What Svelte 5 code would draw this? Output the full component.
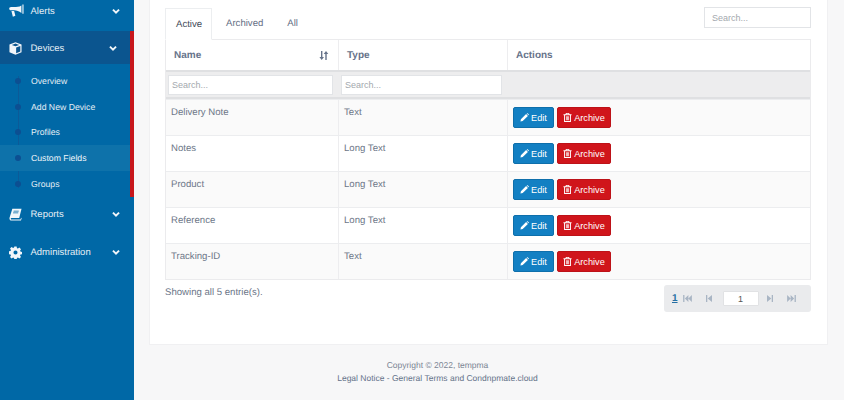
<script lang="ts">
  const subItems = ['Overview', 'Add New Device', 'Profiles', 'Custom Fields', 'Groups'];
  const rows = [
    { name: 'Delivery Note', type: 'Text' },
    { name: 'Notes', type: 'Long Text' },
    { name: 'Product', type: 'Long Text' },
    { name: 'Reference', type: 'Long Text' },
    { name: 'Tracking-ID', type: 'Text' }
  ];
</script>

{#snippet chevron()}
  <svg class="chevron" viewBox="0 0 10 8" width="8" height="7" aria-hidden="true">
    <path d="M1.2 1.6 5 5.4l3.8-3.8" fill="none" stroke="currentColor" stroke-width="2.4" />
  </svg>
{/snippet}

<div class="page">
  <aside class="sidebar">
    <nav class="nav">
      <a class="nav-item">
        <svg class="nav-icon wide" viewBox="0 0 16 14" aria-hidden="true">
          <path fill="currentColor" d="M14.300 0h1.200v10h-1.200zM13.200 1v8C10.800 7.300 8 6.400 5.600 6.200H2.200C.9 6.200 .2 5.300 .2 4.500S.9 2.800 2.200 2.800h3.400C8 2.600 10.800 2.700 13.200 1zM2.600 7.100h2.900l1.300 5-2.700 1.100z" />
        </svg>
        <span class="nav-label">Alerts</span>
        {@render chevron()}
      </a>

      <div class="group">
        <a class="nav-item active">
          <svg class="nav-icon" viewBox="0 0 14 14" aria-hidden="true">
            <path fill="currentColor" d="M7 0.300 13.500 2.800v8.300L7 13.700 0.500 11.100V2.800zM7 1.700 3 3.200 7 4.700l4-1.500zM7.700 6v6l4.500-1.800V4.300z" />
          </svg>
          <span class="nav-label">Devices</span>
          {@render chevron()}
        </a>
        <ul class="submenu">
          {#each subItems as item}
            <li class:current={item === 'Custom Fields'}>
              <span class="dot"></span>
              {item}
            </li>
          {/each}
        </ul>
      </div>

      <a class="nav-item">
        <svg class="nav-icon" viewBox="0 0 14 14" aria-hidden="true">
          <path fill="currentColor" fill-rule="evenodd" d="M3.600 0.800H13.500L11 10.800H3C2.200 10.800 1.800 11.200 1.900 11.800 2 12.300 2.400 12.500 3 12.500H12.400L13 10.500 13.600 11 12.900 13.500H2.800C1.400 13.500 0.300 12.400 0.500 10.700zM5 3h5.600l-.2.800H4.800zM4.500 4.800h5.600l-.2.800H4.300z" />
        </svg>
        <span class="nav-label">Reports</span>
        {@render chevron()}
      </a>

      <a class="nav-item">
        <svg class="nav-icon" viewBox="0 0 14 14" aria-hidden="true">
          <path fill="currentColor" fill-rule="evenodd" d="M5.800 0.500h2.400l.4 1.800 1 .4 1.600-1 1.700 1.700-1 1.600.4 1 1.800.4v2.400l-1.800.4-.4 1 1 1.600-1.700 1.700-1.600-1-1 .4-.4 1.800H5.800l-.4-1.800-1-.4-1.600 1-1.700-1.700 1-1.600-.4-1-1.800-.4V5.800l1.800-.4.4-1-1-1.600 1.700-1.700 1.600 1 1-.4zM7 4.800a2.200 2.200 0 1 0 0 4.400 2.200 2.200 0 0 0 0-4.400z" />
        </svg>
        <span class="nav-label">Administration</span>
        {@render chevron()}
      </a>
    </nav>
  </aside>

  <main class="content">
    <section class="card">
      <div class="toolbar">
        <div class="tabs">
          <span class="tab selected">Active</span>
          <span class="tab">Archived</span>
          <span class="tab">All</span>
        </div>
        <input class="search global-search" placeholder="Search..." />
      </div>

      <div class="table">
        <div class="row head">
          <div class="cell name-col">
            Name
            <svg class="sort" viewBox="0 0 10 9" width="10" height="9" aria-hidden="true">
              <path fill="currentColor" d="M2 0h1.400v6H5L2.700 9 0.400 6H2zM7 0l2.300 3H7.700v6H6.300V3H4.700z" />
            </svg>
          </div>
          <div class="cell type-col">Type</div>
          <div class="cell actions-col">Actions</div>
        </div>
        <div class="row filters">
          <div class="cell name-col"><input class="search" placeholder="Search..." /></div>
          <div class="cell type-col"><input class="search" placeholder="Search..." /></div>
          <div class="cell actions-col"></div>
        </div>
        {#each rows as row, i}
          <div class="row body" class:odd={i % 2 === 0}>
            <div class="cell name-col">{row.name}</div>
            <div class="cell type-col">{row.type}</div>
            <div class="cell actions-col">
              <button class="btn edit">
                <svg viewBox="0 0 10 10" width="9" height="9" aria-hidden="true">
                  <path fill="currentColor" d="M0.500 9.500 1 7 6.800 1.200 8.800 3.200 3 9zM7.400 0.600 8 0.300c.3-.1.500 0 .7.200l1 1c.2.200.2.500 0 .7l-.3.400z" />
                </svg>
                Edit
              </button>
              <button class="btn archive">
                <svg viewBox="0 0 10 10" width="9" height="9" aria-hidden="true">
                  <path fill="currentColor" fill-rule="evenodd" d="M3.300 0h3.400l.6 1.400h2.200v1H8.800V10H1.200V2.400H.5v-1h2.200zM4 .9l-.2.500h2.400L6 .9zM2.300 2.400V9h5.400V2.400zM3.300 3.600h.8v4.400h-.8zM4.600 3.600h.8v4.400h-.8zM5.900 3.600h.8v4.400h-.8z" />
                </svg>
                Archive
              </button>
            </div>
          </div>
        {/each}
      </div>

      <div class="table-footer">
        <span class="count">Showing all 5 entrie(s).</span>
        <div class="pager">
          <a class="page-current">1</a>
          <svg class="pg first" viewBox="0 0 10 8" width="9" height="7" aria-hidden="true">
            <path fill="currentColor" d="M0 0h1.500v8H0zM6 0v8L2 4zM10 0v8L6 4z" />
          </svg>
          <svg class="pg prev" viewBox="0 0 7 8" width="6" height="7" aria-hidden="true">
            <path fill="currentColor" d="M0 0h1.500v8H0zM7 0v8L2 4z" />
          </svg>
          <input class="page-input" value="1" />
          <svg class="pg next" viewBox="0 0 7 8" width="6" height="7" aria-hidden="true">
            <path fill="currentColor" d="M7 0H5.500v8H7zM0 0v8l5-4z" />
          </svg>
          <svg class="pg last" viewBox="0 0 10 8" width="9" height="7" aria-hidden="true">
            <path fill="currentColor" d="M10 0H8.500v8H10zM4 0v8l4-4zM0 0v8l4-4z" />
          </svg>
        </div>
      </div>
    </section>

    <footer class="footer">
      <div>Copyright © 2022, tempma</div>
      <div class="legal">Legal Notice - General Terms and Condnpmate.cloud</div>
    </footer>
  </main>
</div>

<style>
  :global(body) {
    margin: 0;
    font-family: "Liberation Sans", Arial, sans-serif;
    font-size: 10px;
    background: #f7f7f8;
    text-rendering: geometricPrecision;
  }

  .page {
    display: flex;
    height: 400px;
    overflow: hidden;
  }

  .sidebar {
    width: 134px;
    flex-shrink: 0;
    background: #0068a6;
    color: #e4eef5;
    overflow: hidden;
  }

  .nav {
    margin-top: -8px;
  }

  .nav-item {
    display: flex;
    align-items: center;
    height: 38px;
    padding: 0 14px 0 9px;
    font-size: 9.5px;
  }

  .nav-icon {
    width: 13px;
    height: 13px;
    flex-shrink: 0;
    color: #f2f6fa;
  }

  .nav-icon.wide {
    width: 15px;
    height: 14px;
    margin-right: -2px;
  }

  .nav-label {
    margin-left: 8.500px;
    flex: 1;
  }

  .chevron {
    color: #f2f6fa;
  }

  .group {
    border-right: 4px solid #c8171c;
    height: 166px;
    box-sizing: border-box;
    margin-top: 1px;
    margin-bottom: -2px;
  }

  .nav-item.active {
    height: 33px;
    padding-top: 1px;
    padding-right: 13px;
    box-sizing: border-box;
    background: #0b558f;
  }

  .submenu {
    list-style: none;
    margin: 4px 0 0;
    padding: 0;
    position: relative;
  }

  .submenu li {
    display: flex;
    align-items: center;
    height: 25.7px;
    padding-left: 31px;
    font-size: 8.7px;
    position: relative;
  }

  .submenu li.current {
    background: #0e72aa;
    color: #f2f6fa;
  }

  .dot {
    position: absolute;
    left: 15px;
    width: 6px;
    height: 6px;
    border-radius: 50%;
    background: #0c4f92;
  }

  .submenu::before {
    content: "";
    position: absolute;
    left: 17.500px;
    top: 8px;
    bottom: 8px;
    width: 1px;
    background: #0c5a98;
  }

  .content {
    flex: 1;
    min-width: 0;
    padding: 0 16px 0 15px;
    color: #6b7688;
  }

  .card {
    background: #fff;
    border: 1px solid #f0f0f2;
    border-top: 0;
    height: 345px;
    box-sizing: border-box;
    padding: 7px 16px 0 15px;
  }

  .toolbar {
    display: flex;
    justify-content: space-between;
    align-items: flex-start;
    height: 32px;
  }

  .tabs {
    display: flex;
    margin-top: 1px;
    position: relative;
    z-index: 1;
  }

  .tab {
    height: 30px;
    line-height: 32px;
    padding: 0 14px 0 0;
    font-size: 9.6px;
    color: #667085;
  }

  .tab + .tab {
    padding-left: 10px;
  }

  .tab.selected {
    width: 47px;
    box-sizing: border-box;
    padding: 0 0 0 10px;
    margin-right: 4px;
    background: #fff;
    border: 1px solid #eceef0;
    border-bottom: 1px solid #fff;
    height: 32px;
    color: #444c5a;
  }

  .search {
    display: block;
    box-sizing: border-box;
    width: 100%;
    height: 20px;
    padding: 0 3px;
    border: 1px solid #e2e4e7;
    background: #fff;
    font: 9px "Liberation Sans", Arial, sans-serif;
  }

  .search::placeholder {
    color: #a3a8ae;
  }

  .global-search {
    width: 107px;
    height: 21px;
    padding: 0 7px;
  }

  .table {
    border: 1px solid #ebebed;
    font-size: 9.6px;
  }

  .row {
    display: grid;
    grid-template-columns: 173px 169px 1fr;
  }

  .cell {
    box-sizing: border-box;
    border-right: 1px solid #ededef;
  }

  .cell:last-child {
    border-right: 0;
  }

  .head {
    height: 32px;
    border-bottom: 2px solid #dfe0e2;
    box-sizing: border-box;
    font-weight: bold;
    color: #66738a;
    font-size: 10px;
  }

  .head .cell {
    display: flex;
    align-items: center;
    justify-content: space-between;
    padding: 1px 9px 0 8px;
  }

  .sort {
    color: #66738a;
  }

  .filters {
    height: 27px;
    background: #ededee;
    border-bottom: 2px solid #dfe0e2;
    box-sizing: border-box;
  }

  .filters .cell {
    padding: 3px 6px 3px 2px;
    border-right: 0;
  }

  .body {
    height: 36px;
    border-top: 1px solid #ecedef;
    box-sizing: border-box;
    color: #6d7788;
  }

  .body.odd {
    background: #fafafa;
  }

  .body .cell {
    padding: 6.500px 5px 0 5px;
  }

  .body .actions-col {
    display: flex;
    gap: 3px;
    padding: 7px 0 0 5px;
  }

  .btn {
    display: flex;
    align-items: center;
    justify-content: center;
    gap: 2px;
    height: 21px;
    padding: 0;
    border-radius: 2px;
    border: 1px solid transparent;
    color: #fff;
    font: 9.2px "Liberation Sans", Arial, sans-serif;
  }

  .edit {
    width: 41px;
    background: #1380c3;
    border-color: #0e6fab;
  }

  .archive {
    width: 54px;
    background: #d0151b;
    border-color: #bd1218;
  }

  .table-footer {
    display: flex;
    justify-content: space-between;
    align-items: flex-start;
    margin-top: 5px;
  }

  .count {
    margin-top: 2px;
    line-height: 12px;
    font-size: 9.6px;
    color: #6b7688;
  }

  .pager {
    display: flex;
    align-items: center;
    width: 147px;
    height: 27px;
    box-sizing: border-box;
    padding-left: 8px;
    background: #eaebed;
    border-radius: 3px;
    color: #a9b5c4;
  }

  .page-current {
    color: #256fa3;
    font-weight: bold;
    font-size: 10px;
    text-decoration: underline;
  }

  .pg {
    flex-shrink: 0;
  }

  .first {
    margin-left: 5px;
  }

  .prev {
    margin-left: 14px;
  }

  .page-input {
    box-sizing: border-box;
    width: 36px;
    height: 15px;
    margin-left: 11px;
    padding: 0;
    border: 1px solid #e1e2e4;
    border-radius: 1px;
    text-align: center;
    font: 9px "Liberation Sans", Arial, sans-serif;
    color: #555;
    background: #fff;
  }

  .next {
    margin-left: 8px;
  }

  .last {
    margin-left: 14px;
  }

  .footer {
    padding: 14px 102px 0 0;
    text-align: center;
    line-height: 13px;
    font-size: 8.5px;
    color: #7b8594;
  }

  .legal {
    color: #65738a;
  }
</style>
